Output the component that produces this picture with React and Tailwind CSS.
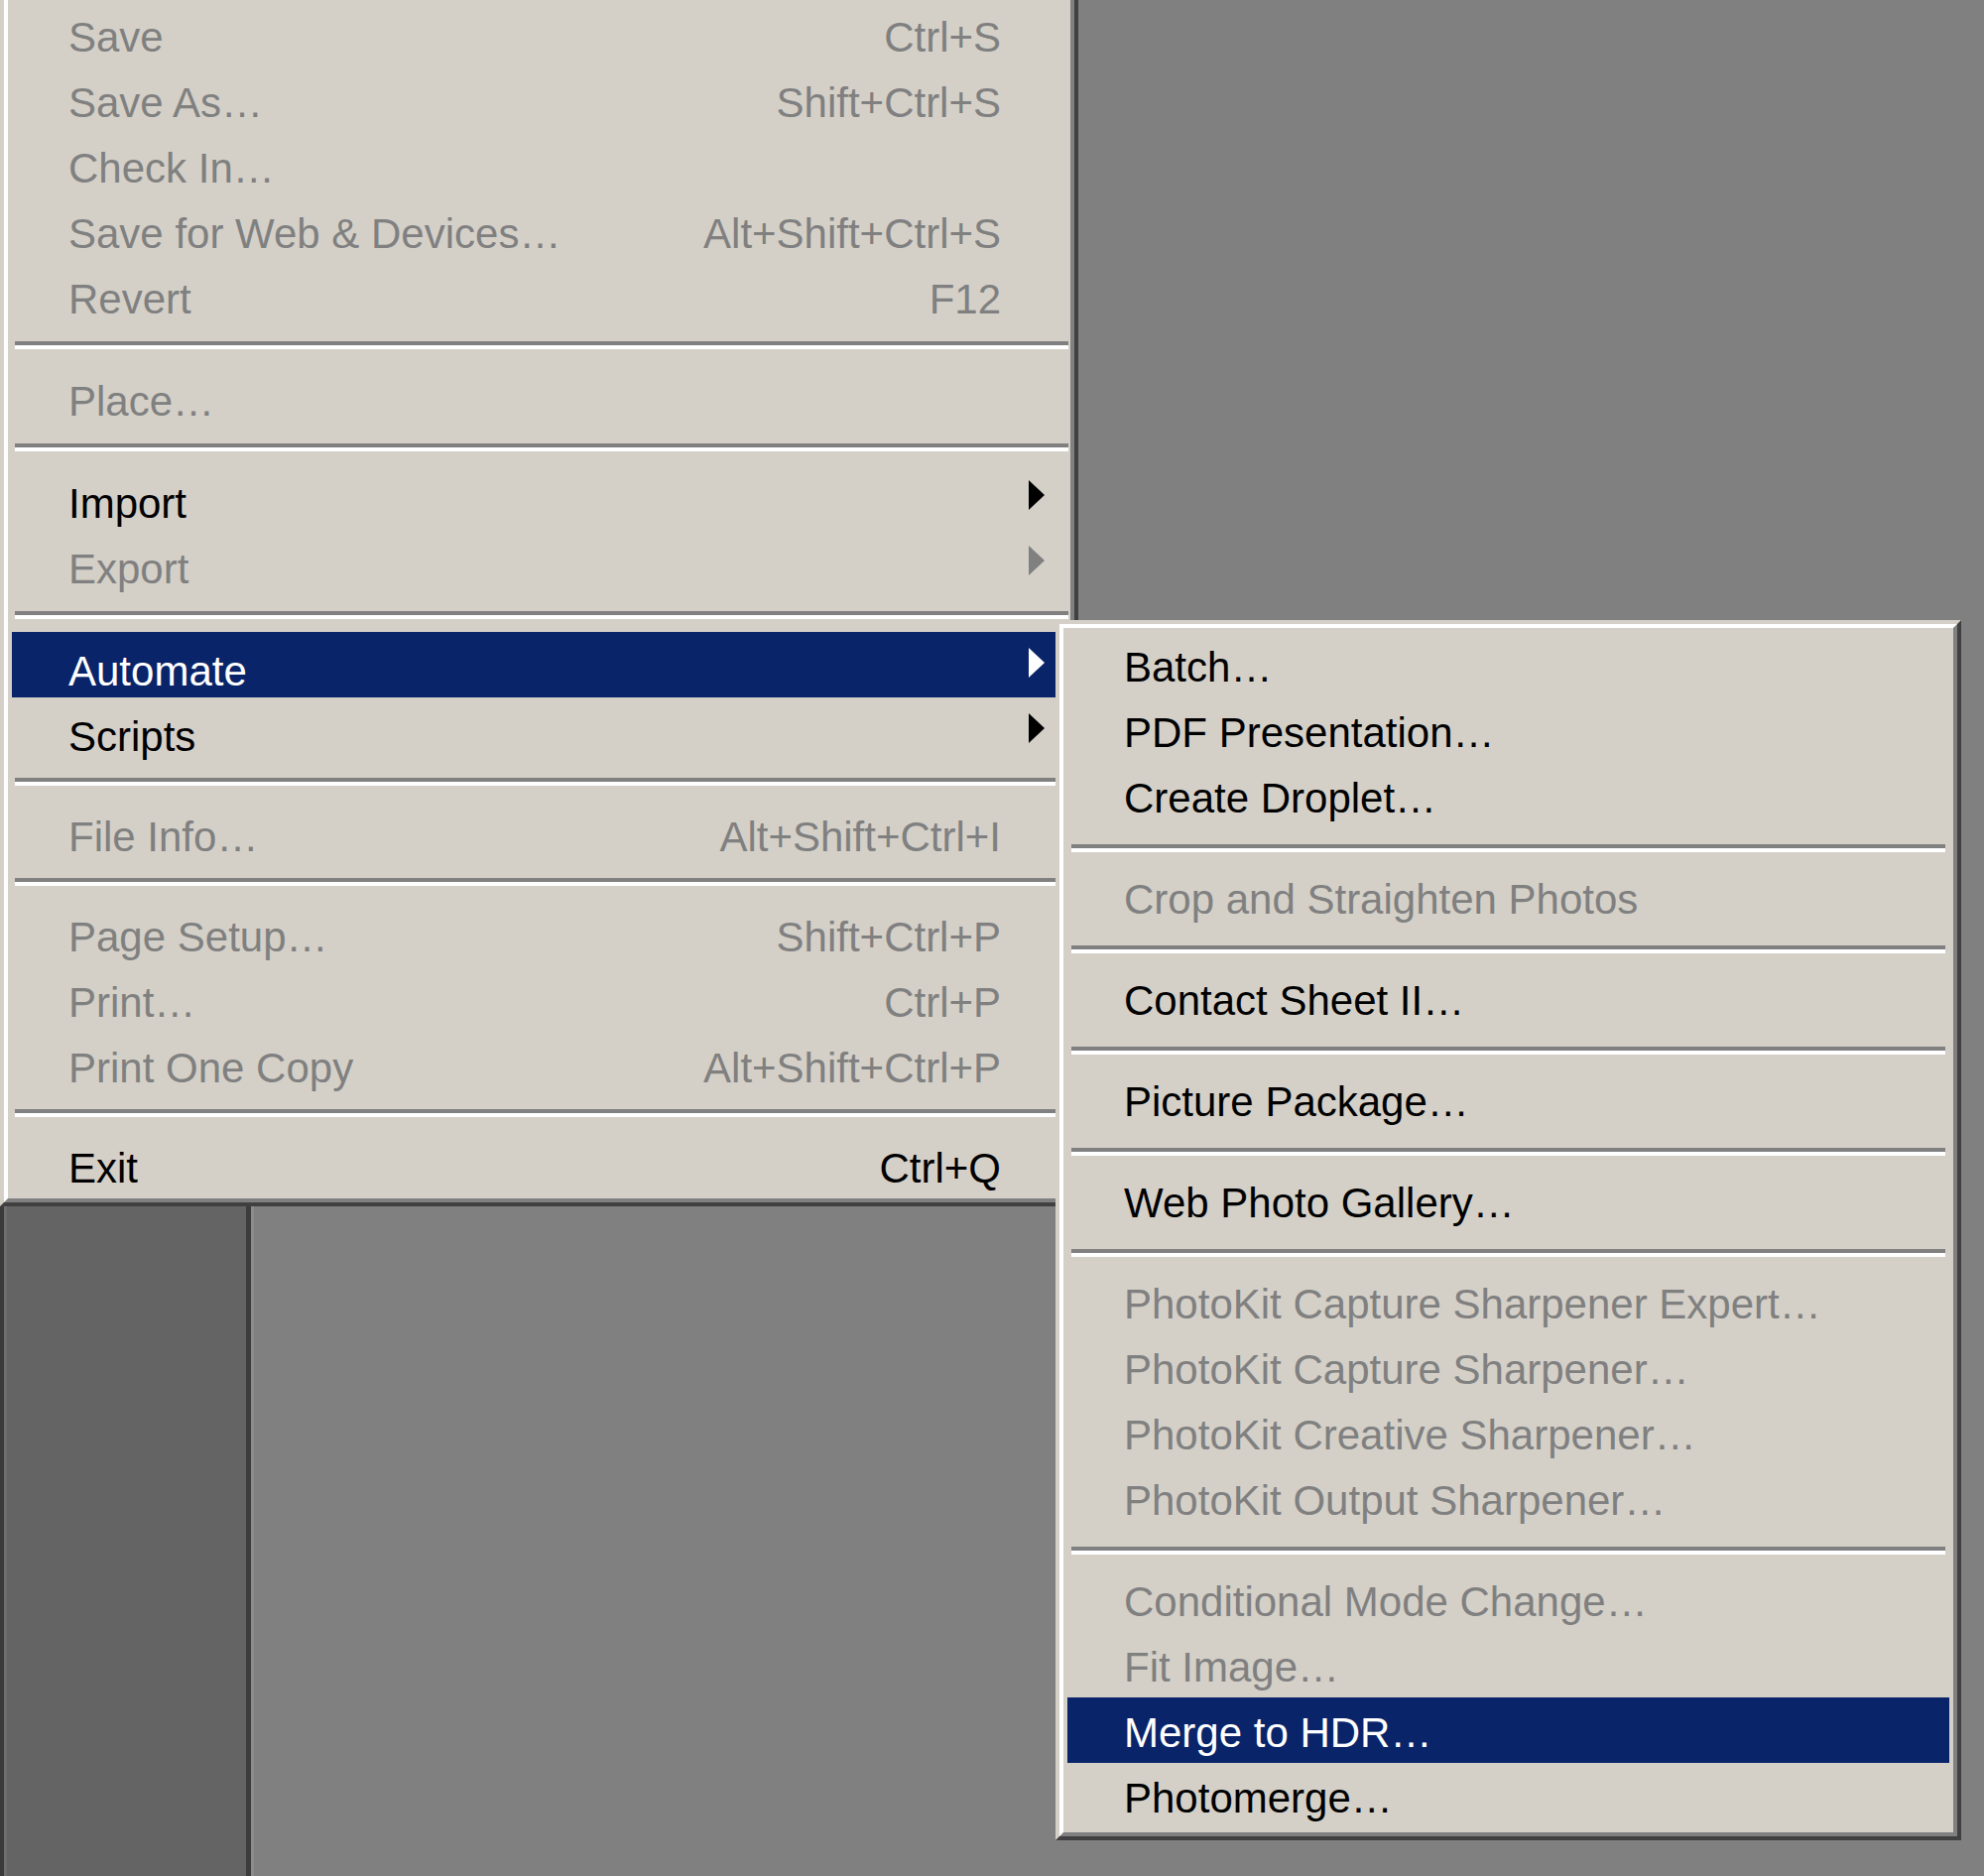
import React from 'react';

const mainItems = [
  { label: 'Save', shortcut: 'Ctrl+S', disabled: true },
  { label: 'Save As…', shortcut: 'Shift+Ctrl+S', disabled: true },
  { label: 'Check In…', disabled: true },
  { label: 'Save for Web & Devices…', shortcut: 'Alt+Shift+Ctrl+S', disabled: true },
  { label: 'Revert', shortcut: 'F12', disabled: true },
  { sep: 'h-[37px] pt-[16px]' },
  { label: 'Place…', disabled: true },
  { sep: 'h-[37px] pt-[16px]' },
  { label: 'Import', submenu: true },
  { label: 'Export', submenu: true, disabled: true },
  { sep: 'h-[37px] pt-[16px]' },
  { label: 'Automate', submenu: true, active: true },
  { label: 'Scripts', submenu: true },
  { sep: 'h-[35px] pt-[15px]' },
  { label: 'File Info…', shortcut: 'Alt+Shift+Ctrl+I', disabled: true },
  { sep: 'h-[35px] pt-[15px]' },
  { label: 'Page Setup…', shortcut: 'Shift+Ctrl+P', disabled: true },
  { label: 'Print…', shortcut: 'Ctrl+P', disabled: true },
  { label: 'Print One Copy', shortcut: 'Alt+Shift+Ctrl+P', disabled: true },
  { sep: 'h-[35px] pt-[15px]' },
  { label: 'Exit', shortcut: 'Ctrl+Q' },
];

const SEP = 'h-[36px] pt-[16px]';

const automateItems = [
  { label: 'Batch…' },
  { label: 'PDF Presentation…' },
  { label: 'Create Droplet…' },
  { sep: SEP },
  { label: 'Crop and Straighten Photos', disabled: true },
  { sep: SEP },
  { label: 'Contact Sheet II…' },
  { sep: SEP },
  { label: 'Picture Package…' },
  { sep: SEP },
  { label: 'Web Photo Gallery…' },
  { sep: SEP },
  { label: 'PhotoKit Capture Sharpener Expert…', disabled: true },
  { label: 'PhotoKit Capture Sharpener…', disabled: true },
  { label: 'PhotoKit Creative Sharpener…', disabled: true },
  { label: 'PhotoKit Output Sharpener…', disabled: true },
  { sep: SEP },
  { label: 'Conditional Mode Change…', disabled: true },
  { label: 'Fit Image…', disabled: true },
  { label: 'Merge to HDR…', active: true },
  { label: 'Photomerge…' },
];

function Arrow({ color }) {
  return (
    <svg width="16" height="30" viewBox="0 0 16 30" className="-mt-[4px] shrink-0">
      <polygon points="0,0 16,15 0,30" fill={color} />
    </svg>
  );
}

function Separator({ size, inset }) {
  return (
    <div className={`${size} ${inset}`}>
      <div className="h-[4px] bg-[#808080]" />
      <div className="h-[4px] bg-white" />
    </div>
  );
}

function MenuRow({ item, withSlots, textOffset }) {
  // colours follow the classic Windows menu states
  const textColor = item.active ? 'text-white' : item.disabled ? 'text-[#808080]' : 'text-black';
  const arrowColor = item.active ? '#ffffff' : item.disabled ? '#808080' : '#000000';

  return (
    <div
      className={`flex h-[66px] items-center pl-[57px] ${withSlots ? 'pr-[22px]' : 'pr-[8px]'} ${
        item.active ? 'bg-[#0a246a]' : ''
      } ${textColor}`}
    >
      <span className={`${textOffset} flex-1 whitespace-nowrap leading-[48px]`}>{item.label}</span>
      {item.shortcut && (
        <span className={`${textOffset} whitespace-nowrap leading-[48px]`}>{item.shortcut}</span>
      )}
      {withSlots && (
        <div className="ml-[28px] flex w-[16px] items-center">
          {item.submenu && <Arrow color={arrowColor} />}
        </div>
      )}
    </div>
  );
}

function MenuFrame({ children, className }) {
  return (
    <div
      className={`border-[4px] border-t-[#d4d0c8] border-l-[#d4d0c8] border-r-[#404040] border-b-[#404040] bg-[#d4d0c8] ${className}`}
    >
      <div className="border-[4px] border-t-white border-l-white border-r-[#808080] border-b-[#808080] p-[4px]">
        {children}
      </div>
    </div>
  );
}

export default function App() {
  return (
    <div
      className="relative flex h-[1891px] w-[2000px] overflow-hidden bg-[#808080] text-[42px]"
      style={{ fontFamily: '"Liberation Sans", Arial, sans-serif' }}
    >
      {/* Workspace: dark tool panel on the left, grey canvas area on the right */}
      <div className="flex h-full">
        <div className="h-full w-[4px] bg-[#3a3a3a]" />
        <div className="h-full w-[3px] bg-[#6e6e6e]" />
        <div className="h-full w-[241px] bg-[#646464]" />
        <div className="h-full w-[5px] bg-[#3c3c3c]" />
        <div className="h-full w-[3px] bg-[#8c8c8c]" />
      </div>
      <div className="flex-1" />

      {/* File menu */}
      <MenuFrame className="absolute left-0 top-[-14px] w-[1087px]">
        {mainItems.map((item, i) =>
          item.sep ? (
            <Separator key={i} size={item.sep} inset="mx-[3px] -mr-[2px]" />
          ) : (
            <MenuRow key={i} item={item} withSlots textOffset="mt-[14px]" />
          )
        )}
      </MenuFrame>

      {/* Automate submenu */}
      <MenuFrame className="absolute left-[1064px] top-[625px] w-[913px]">
        {automateItems.map((item, i) =>
          item.sep ? (
            <Separator key={i} size={item.sep} inset="mx-[4px]" />
          ) : (
            <MenuRow key={i} item={item} textOffset="mt-[6px]" />
          )
        )}
      </MenuFrame>
    </div>
  );
}
